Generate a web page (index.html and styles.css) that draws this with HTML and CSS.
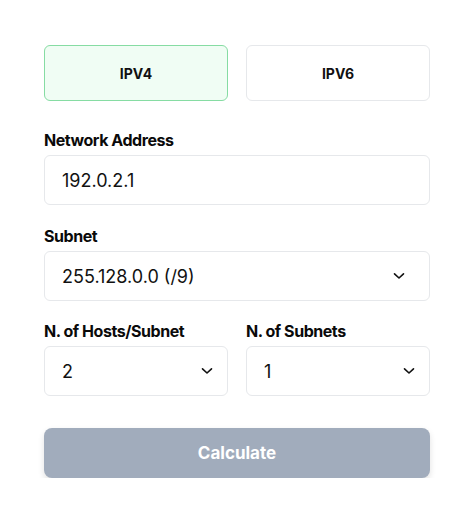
FILE: index.html
```html
<!DOCTYPE html>
<html>
<head>
<meta charset="utf-8">
<link rel="stylesheet" href="styles.css">
</head>
<body>
<div class="calc">
  <div class="tabs">
    <button class="tab active">IPV4</button>
    <button class="tab">IPV6</button>
  </div>
  <div class="field">
    <label class="label">Network Address</label>
    <div class="input">192.0.2.1</div>
  </div>
  <div class="field">
    <label class="label">Subnet</label>
    <div class="input select wide">
      <span>255.128.0.0 (/9)</span>
      <svg class="chev" width="12" height="8" viewBox="0 0 12 8"><path d="M1.5 1.8 L6 6 L10.5 1.8" fill="none" stroke="#111" stroke-width="1.6" stroke-linecap="round" stroke-linejoin="round"/></svg>
    </div>
  </div>
  <div class="row">
    <div class="field">
      <label class="label">N. of Hosts/Subnet</label>
      <div class="input select">
        <span>2</span>
        <svg class="chev" width="12" height="8" viewBox="0 0 12 8"><path d="M1.5 1.8 L6 6 L10.5 1.8" fill="none" stroke="#111" stroke-width="1.6" stroke-linecap="round" stroke-linejoin="round"/></svg>
      </div>
    </div>
    <div class="field">
      <label class="label">N. of Subnets</label>
      <div class="input select">
        <span>1</span>
        <svg class="chev" width="12" height="8" viewBox="0 0 12 8"><path d="M1.5 1.8 L6 6 L10.5 1.8" fill="none" stroke="#111" stroke-width="1.6" stroke-linecap="round" stroke-linejoin="round"/></svg>
      </div>
    </div>
  </div>
  <button class="calc-btn">Calculate</button>
</div>
</body>
</html>
```

FILE: styles.css
```css
* { box-sizing: border-box; }
body {
  margin: 0;
  background: #ffffff;
  font-family: Inter, "Noto Sans", "Liberation Sans", sans-serif;
  color: #111111;
}
.calc {
  width: 474px;
  padding: 45px 44px 0 44px;
  display: flex;
  flex-direction: column;
}
.tabs {
  display: grid;
  grid-template-columns: 1fr 1fr;
  gap: 18px;
}
.tab {
  height: 56px;
  border: 1px solid #e6e8eb;
  border-radius: 6px;
  background: #ffffff;
  font-family: inherit;
  font-size: 14px;
  font-weight: 700;
  color: #111111;
  padding: 0;
}
.tab.active {
  background: #f0fdf4;
  border-color: #86dca3;
}
.field {
  display: flex;
  flex-direction: column;
  margin-top: 27px;
}
.field + .field { margin-top: 19px; }
.label {
  font-size: 16px;
  font-weight: 700;
  line-height: 24px;
  letter-spacing: -0.45px;
  color: #0a0a0a;
  margin-bottom: 3px;
}
.input {
  height: 50px;
  border: 1px solid #e6e8eb;
  border-radius: 6px;
  padding: 0 17px;
  display: flex;
  align-items: center;
  font-size: 18px;
  color: #111111;
}
.select { justify-content: space-between; padding-right: 14px; }
.select.wide { padding-right: 24px; }
.chev { display: block; }
.row {
  display: grid;
  grid-template-columns: 1fr 1fr;
  gap: 18px;
  margin-top: 18px;
}
.row .field { margin-top: 0; }
.calc-btn {
  margin-top: 32px;
  height: 50px;
  border: none;
  border-radius: 8px;
  background: #a1acbc;
  color: #ffffff;
  font-family: inherit;
  font-size: 17px;
  font-weight: 700;
  box-shadow: 0 3px 6px rgba(0,0,0,0.12);
}
```
